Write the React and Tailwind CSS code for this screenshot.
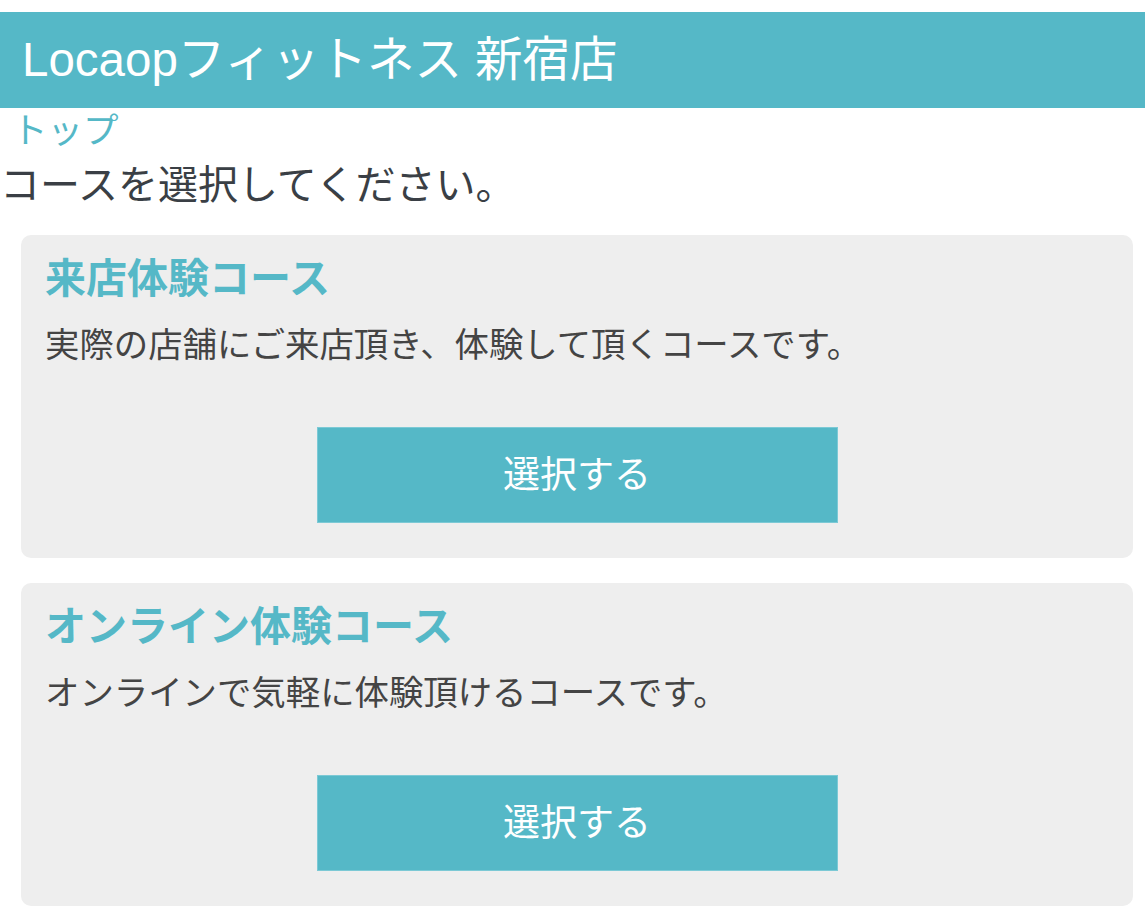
export default function App() {
  const courses = [
    { title: "来店体験コース", desc: "実際の店舗にご来店頂き、体験して頂くコースです。" },
    { title: "オンライン体験コース", desc: "オンラインで気軽に体験頂けるコースです。" },
  ];
  return (
    <div className="w-[1145px] min-h-[918px] bg-white pt-[12px] font-['Liberation_Sans','Noto_Sans_CJK_JP',sans-serif]">
      <header className="h-[96px] bg-[#55b8c7] flex items-center px-[22px]">
        <h1 className="text-[47.5px] leading-none text-white font-normal">Locaopフィットネス 新宿店</h1>
      </header>
      <div className="pl-[12px] h-[46px] text-[35.5px] leading-[46px] text-[#55b8c7]">トップ</div>
      <p className="text-[40px] leading-[62px] text-[#3a3f45]">コースを選択してください。</p>
      <div className="flex flex-col gap-[25px] mt-[19px] ml-[21px] mr-[12px]">
        {courses.map((c) => (
          <div key={c.title} className="bg-[#eeeeee] rounded-[10px] pt-[16px] pb-[35px] px-[24px] flex flex-col">
            <h2 className="text-[41px] leading-[56px] font-bold text-[#55b8c7]">{c.title}</h2>
            <p className="mt-[13px] text-[34.4px] leading-[50px] text-[#444444]">{c.desc}</p>
            <button className="mt-[57px] self-center w-[521px] h-[96px] bg-[#55b8c7] border border-[#7cc9d5] text-white text-[37px] leading-none">
              選択する
            </button>
          </div>
        ))}
      </div>
    </div>
  );
}
